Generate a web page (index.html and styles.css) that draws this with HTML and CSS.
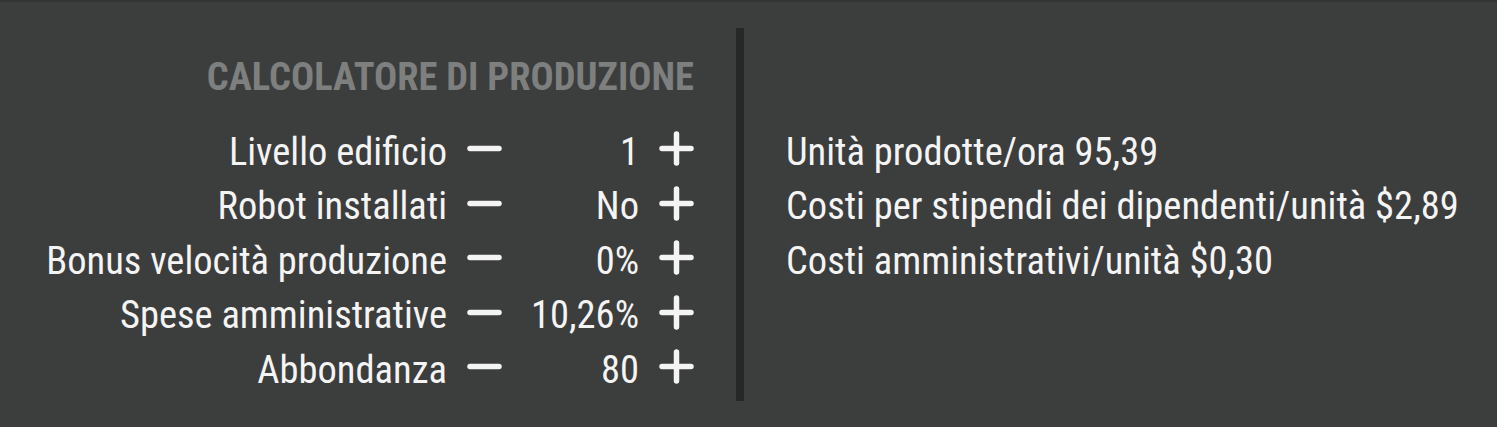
FILE: index.html
```html
<!DOCTYPE html>
<html lang="it">
<head>
  <meta charset="UTF-8" />
  <title>Calcolatore di produzione</title>
  <meta name="viewport" content="width=device-width, initial-scale=1.0" />
  <link rel="stylesheet" href="styles.css">
</head>
<body>
  <div id="calc">
    <div class="inputs">
      <h1>CALCOLATORE DI PRODUZIONE</h1>
      <div class="rows">
        <span class="label">Livello edificio</span>
        <button class="step" aria-label="meno"><svg viewBox="0 0 35 35"><path d="M3 17.5h29"/></svg></button>
        <span class="value">1</span>
        <button class="step" aria-label="più"><svg viewBox="0 0 35 35"><path d="M3 17.5h29M17.5 3v29"/></svg></button>

        <span class="label">Robot installati</span>
        <button class="step" aria-label="meno"><svg viewBox="0 0 35 35"><path d="M3 17.5h29"/></svg></button>
        <span class="value">No</span>
        <button class="step" aria-label="più"><svg viewBox="0 0 35 35"><path d="M3 17.5h29M17.5 3v29"/></svg></button>

        <span class="label">Bonus velocità produzione</span>
        <button class="step" aria-label="meno"><svg viewBox="0 0 35 35"><path d="M3 17.5h29"/></svg></button>
        <span class="value">0%</span>
        <button class="step" aria-label="più"><svg viewBox="0 0 35 35"><path d="M3 17.5h29M17.5 3v29"/></svg></button>

        <span class="label">Spese amministrative</span>
        <button class="step" aria-label="meno"><svg viewBox="0 0 35 35"><path d="M3 17.5h29"/></svg></button>
        <span class="value">10,26%</span>
        <button class="step" aria-label="più"><svg viewBox="0 0 35 35"><path d="M3 17.5h29M17.5 3v29"/></svg></button>

        <span class="label">Abbondanza</span>
        <button class="step" aria-label="meno"><svg viewBox="0 0 35 35"><path d="M3 17.5h29"/></svg></button>
        <span class="value">80</span>
        <button class="step" aria-label="più"><svg viewBox="0 0 35 35"><path d="M3 17.5h29M17.5 3v29"/></svg></button>
      </div>
    </div>

    <div class="divider"></div>

    <div class="results">
      <div>Unità prodotte/ora 95,39</div>
      <div>Costi per stipendi dei dipendenti/unità $2,89</div>
      <div>Costi amministrativi/unità $0,30</div>
    </div>
  </div>
</body>
</html>
```
FILE: styles.css
```css
html, body {
  margin: 0;
  padding: 0;
  height: 100%;
}

body {
  background: #3c3d3d;
  border-top: 2px solid #333434;
  box-sizing: border-box;
  font-family: "Roboto Condensed", Roboto, sans-serif;
  font-size: 38.5px;
  line-height: 54.5px;
  color: #f4f4f4;
  overflow: hidden;
}

#calc {
  display: flex;
  padding-top: 26px;
  gap: 42px;
}

.inputs {
  width: 694px;
  display: flex;
  flex-direction: column;
  align-items: flex-end;
  padding: 22px 0 4px;
}

h1 {
  margin: 0 0 20px;
  font-size: 38.5px;
  font-weight: bold;
  line-height: 54.5px;
  color: #7e7f7f;
}

.rows {
  display: grid;
  grid-template-columns: auto 35px 117px 35px;
  column-gap: 20px;
  align-items: center;
}

.label,
.value {
  text-align: right;
}

.step {
  display: block;
  width: 35px;
  height: 35px;
  padding: 0;
  margin-bottom: 6px;
  border: 0;
  background: none;
  cursor: pointer;
}

.step svg {
  display: block;
  width: 35px;
  height: 35px;
  fill: none;
  stroke: #f4f4f4;
  stroke-width: 5.5;
  stroke-linecap: round;
}

.divider {
  width: 8px;
  background: #262727;
}

/* lines up with the first three input rows */
.results {
  padding-top: 96.5px;
}
```
